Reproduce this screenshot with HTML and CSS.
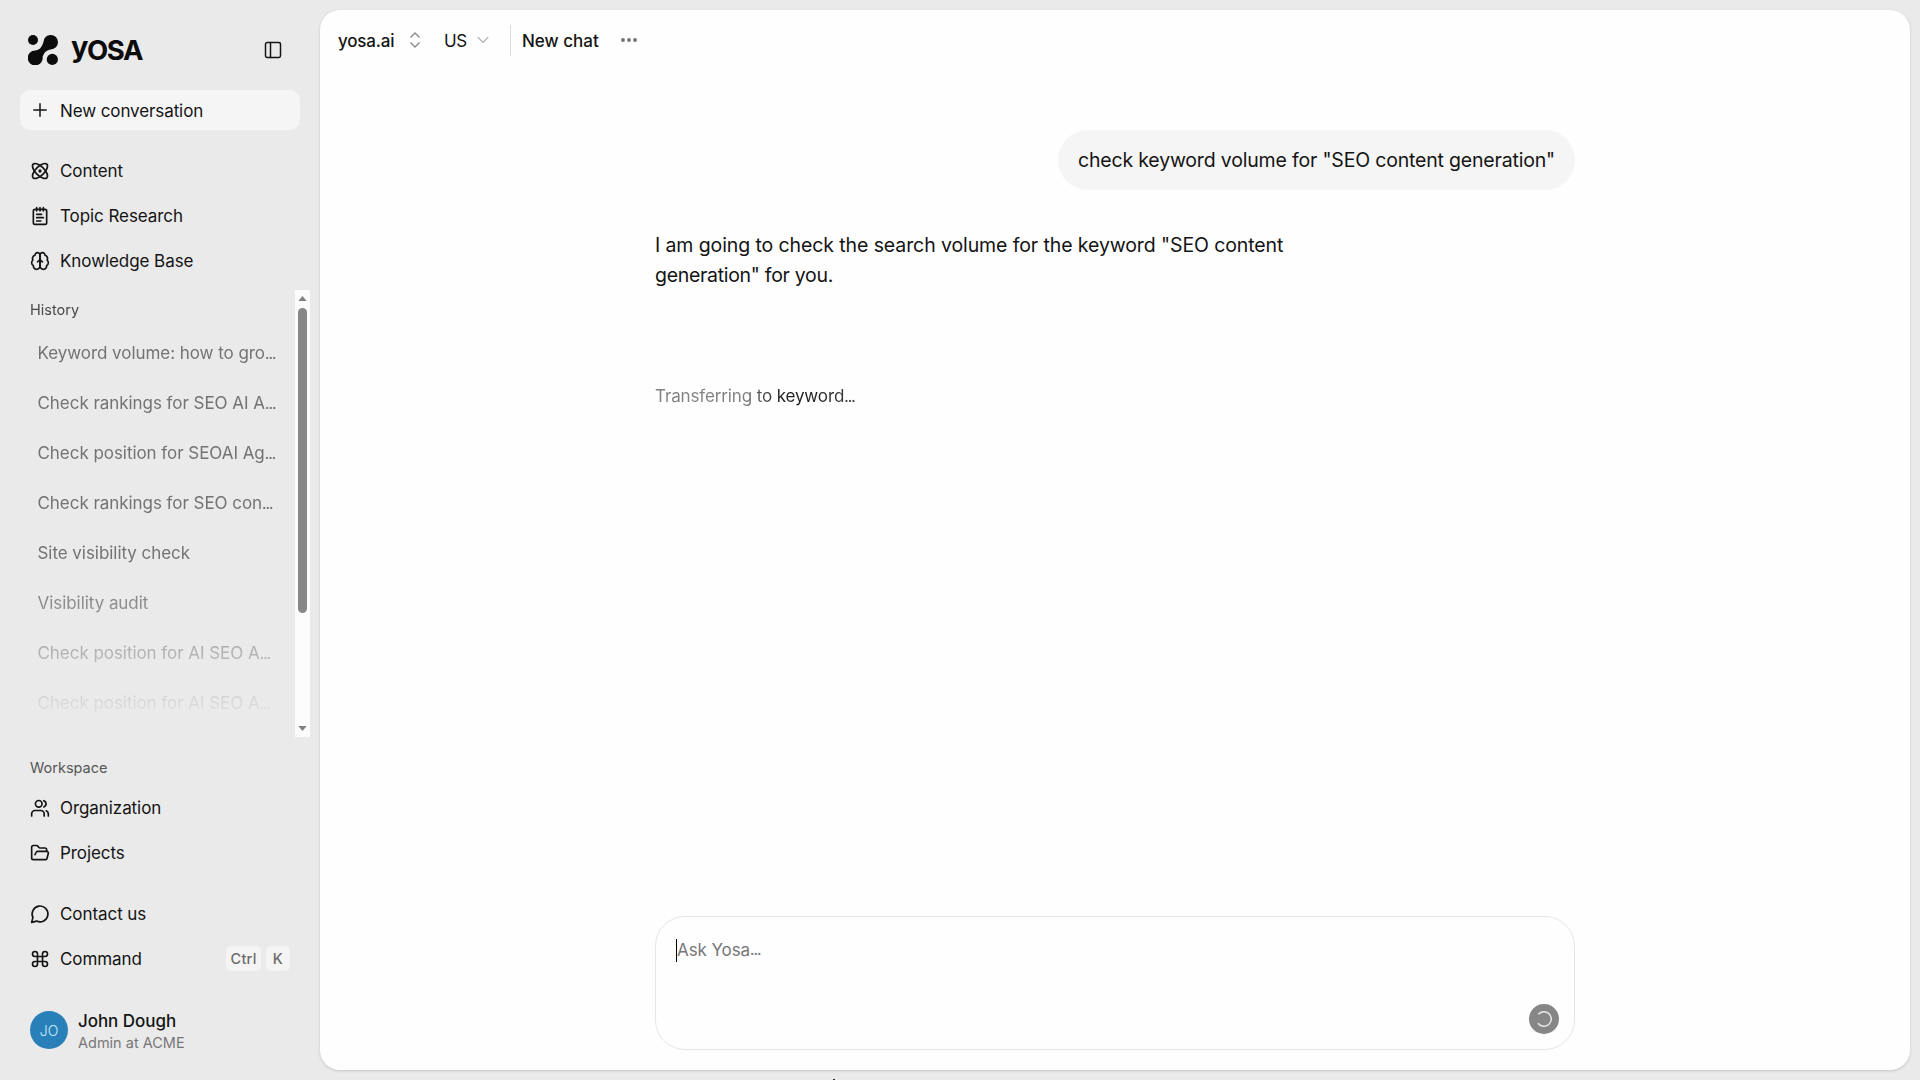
FILE: index.html
```html
<!DOCTYPE html>
<html lang="en">
<head>
<meta charset="utf-8">
<title>Yosa – New chat</title>
<link rel="stylesheet" href="styles.css">
</head>
<body>
<div class="app">
  <aside class="sidebar">
    <div class="brand">
      <svg class="mark" viewBox="0 0 30 30"><circle cx="5" cy="5" r="5"/><circle cx="24.3" cy="24.4" r="5.6"/><path d="M22.8 0a7.2 7.2 0 0 1 0 14.4c-4 .6-6 2-8.2 7.2a7.5 7.5 0 1 1-7.4-6.2c4-.4 6.200-2.400 8.200-8.200A7.200 7.200 0 0 1 22.800 0z"/></svg>
      <span class="wordmark"><span class="small-y">y</span>OSA</span>
      <svg class="icon toggle" viewBox="0 0 24 24"><rect x="3" y="3" width="18" height="18" rx="2"/><path d="M9 3v18"/></svg>
    </div>
    <button class="new"><svg class="icon" viewBox="0 0 24 24"><path d="M4.6 12h14.8M12 4.6v14.8"/></svg>New conversation</button>
    <nav class="nav">
      <a><svg class="icon" viewBox="0 0 24 24"><circle cx="12" cy="12" r="1"/><path d="M20.2 20.2c2.04-2.03.02-7.36-4.5-11.9-4.54-4.52-9.87-6.54-11.9-4.5-2.04 2.03-.02 7.36 4.5 11.9 4.54 4.52 9.87 6.54 11.9 4.5Z"/><path d="M15.7 15.7c4.52-4.54 6.54-9.87 4.5-11.9-2.03-2.04-7.36-.02-11.9 4.5-4.52 4.54-6.54 9.87-4.5 11.9 2.03 2.04 7.36.02 11.9-4.5Z"/></svg>Content</a>
      <a><svg class="icon" viewBox="0 0 24 24"><path d="M8 2v4M12 2v4M16 2v4"/><rect x="4" y="4" width="16" height="18" rx="2"/><path d="M8 10h6M8 14h8M8 18h5"/></svg>Topic Research</a>
      <a><svg class="icon" viewBox="0 0 24 24"><path d="M12 5a3 3 0 1 0-5.997.125 4 4 0 0 0-2.526 5.77 4 4 0 0 0 .556 6.588A4 4 0 1 0 12 18Z"/><path d="M12 5a3 3 0 1 1 5.997.125 4 4 0 0 1 2.526 5.77 4 4 0 0 1-.556 6.588A4 4 0 1 1 12 18Z"/><path d="M15 13a4.5 4.5 0 0 1-3-4 4.5 4.5 0 0 1-3 4"/></svg>Knowledge Base</a>
    </nav>
    <section class="history">
      <div class="history-body">
        <h2>History</h2>
        <ul>
          <li>Keyword volume: how to gro<span class="more">…</span></li>
          <li>Check rankings for SEO AI A<span class="more">…</span></li>
          <li>Check position for SEOAI Ag<span class="more">…</span></li>
          <li>Check rankings for SEO con<span class="more">…</span></li>
          <li>Site visibility check</li>
          <li>Visibility audit</li>
          <li>Check position for AI SEO A<span class="more">…</span></li>
          <li>Check position for AI SEO A<span class="more">…</span></li>
        </ul>
      </div>
      <div class="scrollbar">
        <svg viewBox="0 0 10 6"><path d="M5 0l5 6H0z"/></svg>
        <div class="thumb"></div>
        <svg class="down" viewBox="0 0 10 6"><path d="M0 0h10L5 6z"/></svg>
      </div>
    </section>
    <h2 class="workspace">Workspace</h2>
    <nav class="nav">
      <a><svg class="icon" viewBox="0 0 24 24"><path d="M17 21.500V19a4 4 0 0 0-4-4H6a4 4 0 0 0-4 4v2.500"/><circle cx="10.500" cy="7" r="4"/><path d="M22 21.500V19a4 4 0 0 0-2.500-3.700M16.500 3.200a4 4 0 0 1 0 7.600"/></svg>Organization</a>
      <a><svg class="icon" viewBox="0 0 24 24"><path d="m6 14 1.45-2.9A2 2 0 0 1 9.24 10H20a2 2 0 0 1 1.94 2.5l-1.55 6a2 2 0 0 1-1.94 1.5H4a2 2 0 0 1-2-2V5c0-1.1.9-2 2-2h3.93a2 2 0 0 1 1.66.9l.82 1.2a2 2 0 0 0 1.66.9H18a2 2 0 0 1 2 2v2"/></svg>Projects</a>
    </nav>
    <nav class="nav support">
      <a><svg class="icon" viewBox="0 0 24 24"><path d="M7.9 20.500A9.500 9.500 0 1 0 3.500 16.100L2 22Z"/></svg>Contact us</a>
      <a><svg class="icon" viewBox="0 0 24 24"><path d="M15 6v12a3 3 0 1 0 3-3H6a3 3 0 1 0 3 3V6a3 3 0 1 0-3 3h12a3 3 0 1 0-3-3"/></svg>Command<span class="keys"><kbd>Ctrl</kbd><kbd>K</kbd></span></a>
    </nav>
    <div class="user">
      <div class="avatar">JO</div>
      <div><div class="name">John Dough</div><div class="role">Admin at ACME</div></div>
    </div>
  </aside>
  <main class="panel">
    <header class="topbar">
      <span class="site">yosa.ai</span>
      <svg class="updown" viewBox="0 0 12 16"><path d="M1.5 5.5L6 1l4.5 4.5M1.5 10.5L6 15l4.5-4.5"/></svg>
      <span class="region">US</span>
      <svg class="caret-down" viewBox="0 0 12 8"><path d="M.8 1.2L6 6.4l5.2-5.2"/></svg>
      <span class="divider"></span>
      <span class="title">New chat</span>
      <svg class="dots" viewBox="0 0 16 4"><circle cx="2" cy="2" r="1.9"/><circle cx="8" cy="2" r="1.9"/><circle cx="14" cy="2" r="1.9"/></svg>
    </header>
    <div class="thread">
      <div class="bubble">check keyword volume for "SEO content generation"</div>
      <p class="answer">I am going to check the search volume for the keyword "SEO content<br><span class="tail">generation" for you.</span></p>
      <p class="status">Transferring to keyword<span class="more">…</span></p>
      <div class="composer">
        <div class="prompt"><span class="caret"></span>Ask Yosa<span class="more">…</span></div>
        <button class="send"><svg viewBox="0 0 18 18"><path d="M3.3 4.3A7.3 7.3 0 1 1 3 13.2"/></svg></button>
      </div>
    </div>
  </main>
  <span class="pointer"></span>
</div>
</body>
</html>
```
FILE: styles.css
```css
* { box-sizing: border-box; margin: 0; padding: 0; }
body { background: #eaeaea; color: #141414; font: 17px/24px Inter, "Liberation Sans", sans-serif; }
button { border: 0; font: inherit; color: inherit; }
.app { position: relative; display: flex; width: 1920px; height: 1080px; overflow: hidden; }
svg { display: block; flex: none; }

.icon { width: 20px; height: 20px; fill: none; stroke: #141414; stroke-width: 2; stroke-linecap: round; stroke-linejoin: round; }
.more { font-family: Roboto, sans-serif; font-size: 16px; font-weight: 500; letter-spacing: -1px; }

.sidebar { display: flex; flex-direction: column; width: 320px; padding: 30px 10px 0 20px; }
.brand { display: flex; align-items: center; height: 40px; padding-left: 8px; }
.mark { width: 30px; height: 30px; fill: #0c0c0c; }
.wordmark { margin-left: 13px; font-size: 27.5px; line-height: 40px; font-weight: 700; letter-spacing: -1.4px; color: #0c0c0c; }
.small-y { display: inline-block; font-size: 29px; line-height: 30px; transform: translateY(-3px); }
.toggle { margin-left: auto; margin-right: 27px; stroke-width: 1.8; }

.new { display: flex; align-items: center; gap: 10px; width: 280px; height: 40px; margin-top: 20px; padding: 1px 0 0 10px; border-radius: 10px; background: #f5f5f5; letter-spacing: -.1px; }
.new .icon { margin-top: -1px; stroke-width: 1.8; }
.nav { display: flex; flex-direction: column; letter-spacing: -.07px; }
.nav a { display: flex; align-items: center; gap: 10px; height: 45px; padding-left: 10px; }
.new + .nav { margin-top: 18px; }

h2 { padding-left: 10px; font-size: 14.5px; font-weight: 400; line-height: 20px; color: #484848; }
.history { display: flex; height: 447px; margin-top: 7px; }
.history-body { width: 275px; padding-top: 10px; -webkit-mask-image: linear-gradient(#000 280px, transparent 435px); mask-image: linear-gradient(#000 280px, transparent 435px); }
.history ul { list-style: none; margin-top: 8px; }
.history li { height: 50px; padding-left: 17.5px; line-height: 50px; color: #737373; letter-spacing: -.05px; white-space: nowrap; }
.scrollbar { display: flex; flex-direction: column; align-items: center; width: 15px; background: #fcfcfc; padding: 6px 0; }
.scrollbar svg { width: 9px; height: 5px; fill: #808080; }
.thumb { width: 9px; height: 305px; margin-top: 7px; border-radius: 5px; background: #878787; }
.scrollbar .down { margin-top: auto; }

.workspace { margin-top: 21px; margin-bottom: 7px; color: #565656; }
.support { margin-top: 16px; }
.keys { display: flex; gap: 5px; margin-left: auto; margin-right: 20px; }
kbd { height: 25px; padding: 0 4px; border-radius: 5px; background: #f4f4f4; color: #6b6b6b; font: 500 14.5px/25px Inter, "Liberation Sans", sans-serif; letter-spacing: .3px; }
kbd + kbd { padding: 0 7px; }
.user { display: flex; align-items: center; gap: 10px; margin: 26px 0 0 10px; }
.avatar { width: 38px; height: 38px; margin-top: -1px; border-radius: 50%; background: #2980b9; color: #c9eefb; font-size: 14px; font-weight: 300; line-height: 39px; text-align: center; }
.name { padding-top: 3px; font-weight: 500; line-height: 22px; letter-spacing: -.05px; }
.role { padding-top: 1px; font-size: 14.5px; line-height: 20px; color: #777; }

.panel { display: flex; flex-direction: column; width: 1590px; height: 1060px; margin-top: 10px; border-radius: 20px; background: #fefefe; box-shadow: 0 1px 3px rgba(0, 0, 0, .16); }
.topbar { display: flex; align-items: center; height: 60px; padding: 1px 0 0 18px; }
.site { width: 57px; font-weight: 500; letter-spacing: -.2px; }
.updown { width: 12px; height: 16px; margin: -1px 0 0 14px; fill: none; stroke: #888; stroke-width: 1.3; }
.region { width: 24px; margin-left: 23px; letter-spacing: -.5px; }
.caret-down { width: 12px; height: 8px; margin: -1px 0 0 9px; fill: none; stroke: #aaa; stroke-width: 1.2; }
.divider { width: 1px; height: 31px; margin: 0 11px 0 21px; background: #dcdcdc; }
.title { font-weight: 500; letter-spacing: 0; }
.dots { width: 16px; height: 4px; margin: -1px 0 0 22px; fill: #707070; }

.thread { display: flex; flex: 1; flex-direction: column; width: 920px; margin-left: 335px; padding: 60px 0 20px; }
.bubble { align-self: flex-end; height: 60px; padding: 0 20px; border-radius: 30px; background: #f5f5f5; font-size: 19.5px; line-height: 61px; letter-spacing: -.18px; white-space: nowrap; }
.answer { margin-top: 40px; font-size: 19.5px; line-height: 30px; letter-spacing: -.1px; }
.tail { letter-spacing: -.3px; }
.status { align-self: flex-start; margin-top: 94px; letter-spacing: -.13px; color: transparent; background: linear-gradient(90deg, #808080 45%, #222 62%, #222 80%, #444); -webkit-background-clip: text; background-clip: text; }
.composer { display: flex; flex-direction: column; justify-content: space-between; height: 134px; margin-top: auto; padding: 21px 15px 15px 20px; border: 1px solid #e6e6e6; border-radius: 30px; }
.prompt { display: flex; align-items: center; color: #777; letter-spacing: -.1px; }
.caret { width: 1px; height: 23px; background: #000; }
.send { display: grid; place-items: center; align-self: flex-end; width: 30px; height: 30px; border-radius: 50%; background: #868686; }
.send svg { width: 18px; height: 18px; fill: none; stroke: #e8e8e8; stroke-width: 1.5; }
.pointer { position: absolute; left: 833px; top: 1079px; width: 2px; height: 1px; background: #222; }
```
